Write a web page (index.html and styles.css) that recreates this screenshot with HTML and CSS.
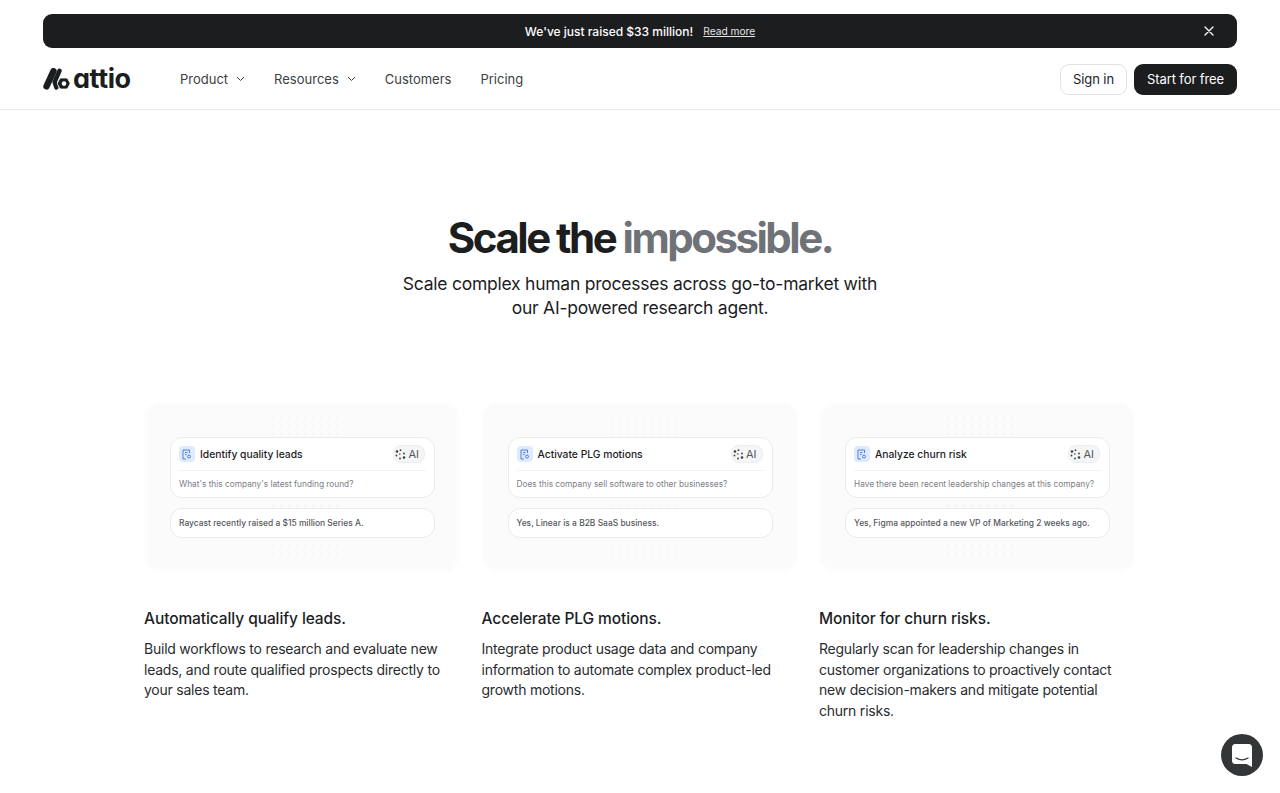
FILE: index.html
```html
<!DOCTYPE html>
<html>
<head>
    <meta charset="UTF-8">
    <title>Attio</title>
    <link rel="stylesheet" href="styles.css">
</head>
<body>
    <div class="top">
        <div class="banner">
            <span class="banner-title">We've just raised $33 million!</span>
            <a class="banner-link" href="#">Read more</a>
            <svg class="banner-close" width="10" height="10" viewBox="0 0 10 10"><path d="M1 1l8 8M9 1l-8 8" stroke="#fff" stroke-width="1.3" stroke-linecap="round"/></svg>
        </div>
        <div class="nav">
            <a class="logo" href="#">
                <svg width="27" height="22" viewBox="0 0 27 22"><path d="M10.500 3.200L3.500 18.300" stroke="#1c1d1f" stroke-width="6.400" stroke-linecap="round"/><path d="M16.500 2.800L11.600 14L13.400 19.500" fill="none" stroke="#1c1d1f" stroke-width="4.400" stroke-linejoin="round" stroke-linecap="round"/><path d="M18.300 10h4.800c.8 0 1.400.4 1.800 1l1.800 3.500c.4.700.4 1.400 0 2.100l-1.800 3.400c-.4.700-1 1-1.800 1h-4.800c-.8 0-1.400-.3-1.800-1l-1.800-3.400c-.4-.7-.4-1.400 0-2.100l1.800-3.500c.4-.6 1-1 1.800-1z" fill="#1c1d1f" stroke="#fff" stroke-width=".8"/><circle cx="21" cy="15.600" r="2.300" fill="#fff"/></svg>
                <span class="logo-text">attio</span>
            </a>
            <div class="nav-links">
                <a class="nav-link" href="#">Product <svg class="chev" width="9" height="6" viewBox="0 0 9 6"><path d="M1 1l3.500 3.500L8 1" fill="none" stroke="#3c3e42" stroke-width="1"/></svg></a>
                <a class="nav-link" href="#">Resources <svg class="chev" width="9" height="6" viewBox="0 0 9 6"><path d="M1 1l3.500 3.500L8 1" fill="none" stroke="#3c3e42" stroke-width="1"/></svg></a>
                <a class="nav-link" href="#">Customers</a>
                <a class="nav-link" href="#">Pricing</a>
            </div>
            <div class="nav-actions">
                <a class="btn btn-light" href="#">Sign in</a>
                <a class="btn btn-dark" href="#">Start for free</a>
            </div>
        </div>
    </div>

    <div class="hero">
        <h1>Scale the <span class="muted">impossible.</span></h1>
        <p>Scale complex human processes across go-to-market with<br>our AI-powered research agent.</p>
    </div>

    <div class="features">
        <div class="feature">
            <div class="preview">
                <div class="panel">
                    <div class="panel-head">
                        <span class="panel-icon"><svg width="10" height="11" viewBox="0 0 10 11"><path d="M7.500 4V1H1v9h3M3 3.500h2.500M3 5.500h1.500" fill="none" stroke="#4f7fe0" stroke-width="1"/><circle cx="7" cy="7.500" r="1.500" fill="none" stroke="#4f7fe0" stroke-width="1"/></svg></span>
                        <span class="panel-title">Identify quality leads</span>
                        <span class="ai-tag"><svg width="11" height="11" viewBox="0 0 11 11" fill="#3c3e42"><circle cx="2" cy="2.500" r="1.300"/><circle cx="5.500" cy="1.200" r=".9"/><circle cx="1.500" cy="6.500" r=".9"/><circle cx="4.800" cy="5" r=".8"/><circle cx="9" cy="4.500" r=".9"/><circle cx="5" cy="9.500" r=".9"/><circle cx="9" cy="8.500" r="1.300"/></svg>AI</span>
                    </div>
                    <div class="panel-question">What's this company's latest funding round?</div>
                </div>
                <div class="answer">Raycast recently raised a $15 million Series A.</div>
            </div>
            <h3>Automatically qualify leads.</h3>
            <p>Build workflows to research and evaluate new leads, and route qualified prospects directly to your sales team.</p>
        </div>
        <div class="feature">
            <div class="preview">
                <div class="panel">
                    <div class="panel-head">
                        <span class="panel-icon"><svg width="10" height="11" viewBox="0 0 10 11"><path d="M7.500 4V1H1v9h3M3 3.500h2.500M3 5.500h1.500" fill="none" stroke="#4f7fe0" stroke-width="1"/><circle cx="7" cy="7.500" r="1.500" fill="none" stroke="#4f7fe0" stroke-width="1"/></svg></span>
                        <span class="panel-title">Activate PLG motions</span>
                        <span class="ai-tag"><svg width="11" height="11" viewBox="0 0 11 11" fill="#3c3e42"><circle cx="2" cy="2.500" r="1.300"/><circle cx="5.500" cy="1.200" r=".9"/><circle cx="1.500" cy="6.500" r=".9"/><circle cx="4.800" cy="5" r=".8"/><circle cx="9" cy="4.500" r=".9"/><circle cx="5" cy="9.500" r=".9"/><circle cx="9" cy="8.500" r="1.300"/></svg>AI</span>
                    </div>
                    <div class="panel-question">Does this company sell software to other businesses?</div>
                </div>
                <div class="answer">Yes, Linear is a B2B SaaS business.</div>
            </div>
            <h3>Accelerate PLG motions.</h3>
            <p>Integrate product usage data and company information to automate complex product-led growth motions.</p>
        </div>
        <div class="feature">
            <div class="preview">
                <div class="panel">
                    <div class="panel-head">
                        <span class="panel-icon"><svg width="10" height="11" viewBox="0 0 10 11"><path d="M7.500 4V1H1v9h3M3 3.500h2.500M3 5.500h1.500" fill="none" stroke="#4f7fe0" stroke-width="1"/><circle cx="7" cy="7.500" r="1.500" fill="none" stroke="#4f7fe0" stroke-width="1"/></svg></span>
                        <span class="panel-title">Analyze churn risk</span>
                        <span class="ai-tag"><svg width="11" height="11" viewBox="0 0 11 11" fill="#3c3e42"><circle cx="2" cy="2.500" r="1.300"/><circle cx="5.500" cy="1.200" r=".9"/><circle cx="1.500" cy="6.500" r=".9"/><circle cx="4.800" cy="5" r=".8"/><circle cx="9" cy="4.500" r=".9"/><circle cx="5" cy="9.500" r=".9"/><circle cx="9" cy="8.500" r="1.300"/></svg>AI</span>
                    </div>
                    <div class="panel-question">Have there been recent leadership changes at this company?</div>
                </div>
                <div class="answer">Yes, Figma appointed a new VP of Marketing 2 weeks ago.</div>
            </div>
            <h3>Monitor for churn risks.</h3>
            <p>Regularly scan for leadership changes in customer organizations to proactively contact new decision-makers and mitigate potential churn risks.</p>
        </div>
    </div>

    <div class="chat-bubble">
        <svg width="20" height="23" viewBox="0 0 20 23"><path d="M3.500 0h13A3.500 3.500 0 0 1 20 3.500V23l-5.500-3H3.500A3.500 3.500 0 0 1 0 16.500v-13A3.500 3.500 0 0 1 3.500 0z" fill="#fff"/><path d="M4 14c3.500 2.200 8.500 2.200 12 0" fill="none" stroke="#333537" stroke-width="1.300" stroke-linecap="round"/></svg>
    </div>
</body>
</html>
```

FILE: styles.css
```css
body {
    font-family: Inter, "Liberation Sans", sans-serif;
    background-color: #ffffff;
    color: #1c1d1f;
    margin: 0;
    height: 793px;
    overflow: hidden;
}
a {
    color: inherit;
    text-decoration: none;
}
.top {
    padding: 14px 43px 0;
    height: 95px;
    border-bottom: 1px solid #e8e9eb;
}
.banner {
    position: relative;
    height: 34px;
    background-color: #1c1d1f;
    border-radius: 9px;
    color: #ffffff;
    display: flex;
    align-items: center;
    justify-content: center;
    gap: 10px;
}
.banner-title {
    font-size: 12px;
    font-weight: 500;
}
.banner-link {
    font-size: 10.200px;
    color: #e4e5e7;
    text-decoration: underline;
}
.banner-close {
    position: absolute;
    right: 23px;
    top: 12px;
}
.nav {
    display: flex;
    align-items: center;
    height: 62px;
}
.logo {
    display: flex;
    align-items: center;
    gap: 3px;
    width: 137px;
}
.logo-text {
    font-size: 27px;
    font-weight: 700;
    font-feature-settings: "cv11";
    letter-spacing: -0.4px;
    line-height: 28px;
}
.nav-links {
    display: flex;
    align-items: center;
    gap: 29px;
    flex: 1;
}
.nav-link {
    font-size: 13px;
    color: #3c3e42;
    display: flex;
    align-items: center;
    gap: 8px;
}
.nav-actions {
    display: flex;
    gap: 7px;
}
.btn {
    font-size: 13px;
    letter-spacing: -0.1px;
    height: 31px;
    line-height: 31px;
    padding: 0 13px;
    border-radius: 9px;
    font-weight: 400;
}
.btn-light {
    border: 1px solid #e0e1e4;
    height: 29px;
    line-height: 29px;
    padding: 0 12px;
}
.btn-dark {
    background-color: #1c1d1f;
    color: #ffffff;
}
.hero {
    text-align: center;
    padding-top: 103px;
}
.hero h1 {
    margin: 0;
    font-size: 42px;
    line-height: 50px;
    font-weight: 700;
    letter-spacing: -0.06em;
}
.muted {
    color: #6f7378;
}
.hero p {
    margin: 9px 0 0;
    font-size: 17.500px;
    letter-spacing: -0.24px;
    line-height: 24px;
}
.features {
    display: flex;
    gap: 21.500px;
    margin: 82px 144px 0;
}
.feature {
    width: 316px;
    flex: none;
}
.preview {
    position: relative;
    height: 170px;
    box-sizing: border-box;
    padding: 35px 25px 0 26px;
    background-color: #fbfbfb;
    box-shadow: inset 0 0 6px #ffffff;
    border-radius: 16px;
    margin-bottom: 36px;
}
.preview::before {
    content: "";
    position: absolute;
    left: 125px;
    top: 12px;
    width: 70px;
    height: 146px;
    background-image: radial-gradient(circle, #f4f4f5 1px, transparent 1.500px);
    background-size: 8px 8px;
}
.panel,
.answer {
    position: relative;
    background-color: #ffffff;
    border: 1px solid #ebeaed;
    border-radius: 12px;
}
.panel {
    height: 59px;
    padding: 0 8px;
}
.panel-head {
    display: flex;
    align-items: center;
    height: 32px;
    border-bottom: 1px solid #f2f2f3;
}
.panel-icon {
    width: 16px;
    height: 16px;
    background-color: #dfeafc;
    border-radius: 4px;
    display: flex;
    align-items: center;
    justify-content: center;
    margin-right: 5px;
}
.panel-title {
    font-size: 10.300px;
    font-weight: 500;
    flex: 1;
}
.ai-tag {
    display: flex;
    align-items: center;
    gap: 2px;
    height: 16px;
    margin-right: 1px;
    padding: 0 5px 0 1px;
    font-size: 11px;
    color: #55585d;
    background-color: #f4f5f6;
    border: 1px solid #ecedef;
    border-radius: 8px;
}
.panel-question {
    font-size: 8.300px;
    color: #7d8085;
    line-height: 26px;
    white-space: nowrap;
}
.answer {
    margin-top: 10px;
    height: 28px;
    line-height: 28px;
    padding: 0 8px;
    font-size: 8.450px;
    font-weight: 500;
    color: #55585d;
    white-space: nowrap;
}
.feature h3 {
    margin: 0;
    font-size: 15.500px;
    letter-spacing: -0.09px;
    line-height: 22px;
    font-weight: 500;
}
.feature p {
    margin: 9px 0 0;
    font-size: 14px;
    letter-spacing: -0.23px;
    line-height: 20.500px;
    color: #2a2c2f;
}
.chat-bubble {
    position: fixed;
    right: 17px;
    bottom: 17px;
    width: 42px;
    height: 42px;
    border-radius: 50%;
    background-color: #333537;
    display: flex;
    align-items: center;
    justify-content: center;
}
```
